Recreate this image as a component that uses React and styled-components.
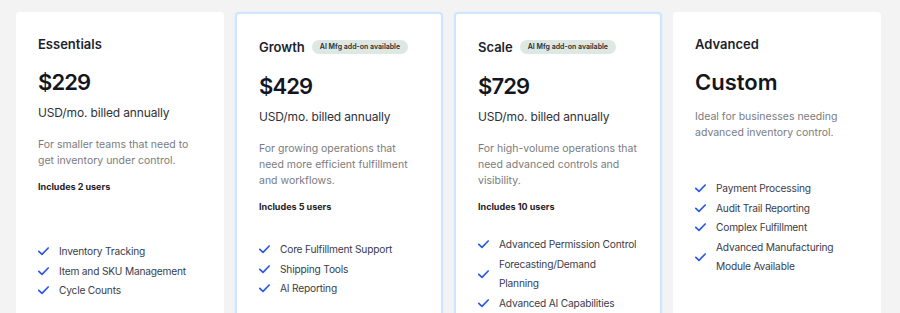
import React from "react";
import styled, { createGlobalStyle } from "styled-components";

const Global = createGlobalStyle`
  html, body { margin: 0; padding: 0; background: #f3f3f3; overflow: hidden; }
  body { font-family: Inter, "Noto Sans", sans-serif; -webkit-font-smoothing: antialiased; }
  * { box-sizing: border-box; }
`;

const Page = styled.div`
  height: 313px;
  overflow: hidden;
  padding: 12px 19px 0 16px;
`;

const Grid = styled.div`
  display: grid;
  grid-template-columns: repeat(4, 208px);
  column-gap: 11px;
`;

const Card = styled.div`
  background: #fff;
  border-radius: 4px;
  min-height: 330px;
  padding: ${(p) => (p.$featured ? "22px 20px 24px 22px" : "24px 22px")};
  border: ${(p) => (p.$featured ? "2px solid #cfe5fb" : "none")};
  box-shadow: ${(p) => (p.$featured ? "0 0 0 1px #e6f1fc" : "none")};
  display: flex;
  flex-direction: column;
`;

const TitleRow = styled.div`
  display: flex;
  align-items: center;
  gap: 7px;
  min-height: ${(p) => (p.$tall ? "21px" : "16px")};
`;

const Title = styled.div`
  font-size: 13px;
  line-height: 16px;
  font-weight: 600;
  color: #1d1f2c;
`;

const Badge = styled.span`
  display: inline-flex;
  align-items: center;
  height: 14px;
  padding: 0 8px;
  border-radius: 7px;
  background: #dde8e2;
  color: #2a2d33;
  font-size: 7px;
  font-weight: 600;
  white-space: nowrap;
`;

const Price = styled.div`
  margin-top: ${(p) => (p.$after ? "15px" : "16px")};
  font-size: 22px;
  line-height: 28px;
  font-weight: 600;
  color: #14161f;
  letter-spacing: ${(p) => (p.$word ? "0px" : "-0.9px")};
`;

const Billing = styled.div`
  margin-top: 8px;
  font-size: 12px;
  line-height: 18px;
  color: #2f313a;
  letter-spacing: -0.15px;
`;

const Desc = styled.div`
  margin-top: ${(p) => p.$mt}px;
  font-size: 10.5px;
  line-height: 16px;
  color: #7a7b80;
`;

const Users = styled.div`
  margin-top: 11px;
  font-size: 9px;
  line-height: 14px;
  font-weight: 700;
  color: #1f2128;
`;

const Features = styled.ul`
  list-style: none;
  margin: ${(p) => p.$mt}px 0 0;
  padding: 0;
  display: flex;
  flex-direction: column;
`;

const Feature = styled.li`
  display: flex;
  align-items: center;
  gap: 10px;
  font-size: 10.2px;
  line-height: 19.5px;
  letter-spacing: -0.2px;
  color: #3a3c4a;
`;

const CheckBox = styled.span`
  flex: 0 0 11px;
  display: flex;
  align-items: center;
`;

const Check = () => (
  <CheckBox>
    <svg width="11" height="9" viewBox="0 0 11 9" fill="none">
      <path d="M0.8 4.3 L4 7.4 L10.2 1" stroke="#2c59e8" strokeWidth="1.7" strokeLinecap="round" strokeLinejoin="round" />
    </svg>
  </CheckBox>
);

const plans = [
  {
    name: "Essentials",
    price: "$229",
    billing: true,
    desc: ["For smaller teams that need to", "get inventory under control."],
    users: "Includes 2 users",
    gap: 48,
    features: [["Inventory Tracking"], ["Item and SKU Management"], ["Cycle Counts"]],
  },
  {
    name: "Growth",
    badge: true,
    featured: true,
    price: "$429",
    billing: true,
    desc: ["For growing operations that", "need more efficient fulfillment", "and workflows."],
    users: "Includes 5 users",
    gap: 26,
    features: [["Core Fulfillment Support"], ["Shipping Tools"], ["AI Reporting"]],
  },
  {
    name: "Scale",
    badge: true,
    featured: true,
    price: "$729",
    billing: true,
    desc: ["For high-volume operations that", "need advanced controls and", "visibility."],
    users: "Includes 10 users",
    gap: 21,
    features: [["Advanced Permission Control"], ["Forecasting/Demand", "Planning"], ["Advanced AI Capabilities"]],
  },
  {
    name: "Advanced",
    price: "Custom",
    billing: false,
    desc: ["Ideal for businesses needing", "advanced inventory control."],
    gap: 38,
    features: [
      ["Payment Processing"],
      ["Audit Trail Reporting"],
      ["Complex Fulfillment"],
      ["Advanced Manufacturing", "Module Available"],
    ],
  },
];

export default function App() {
  return (
    <>
      <Global />
      <Page>
        <Grid>
          {plans.map((p) => (
            <Card key={p.name} $featured={p.featured}>
              <TitleRow $tall={p.badge}>
                <Title>{p.name}</Title>
                {p.badge && <Badge>AI Mfg add-on available</Badge>}
              </TitleRow>
              <Price $word={!p.billing} $after={p.badge}>{p.price}</Price>
              {p.billing && <Billing>USD/mo. billed annually</Billing>}
              <Desc $mt={p.billing ? 15 : 13}>
                {p.desc.map((l, i) => (
                  <div key={i}>{l}</div>
                ))}
              </Desc>
              {p.users && <Users>{p.users}</Users>}
              <Features $mt={p.gap}>
                {p.features.map((f, i) => (
                  <Feature key={i}>
                    <Check />
                    <span>
                      {f.map((l, j) => (
                        <div key={j}>{l}</div>
                      ))}
                    </span>
                  </Feature>
                ))}
              </Features>
            </Card>
          ))}
        </Grid>
      </Page>
    </>
  );
}
